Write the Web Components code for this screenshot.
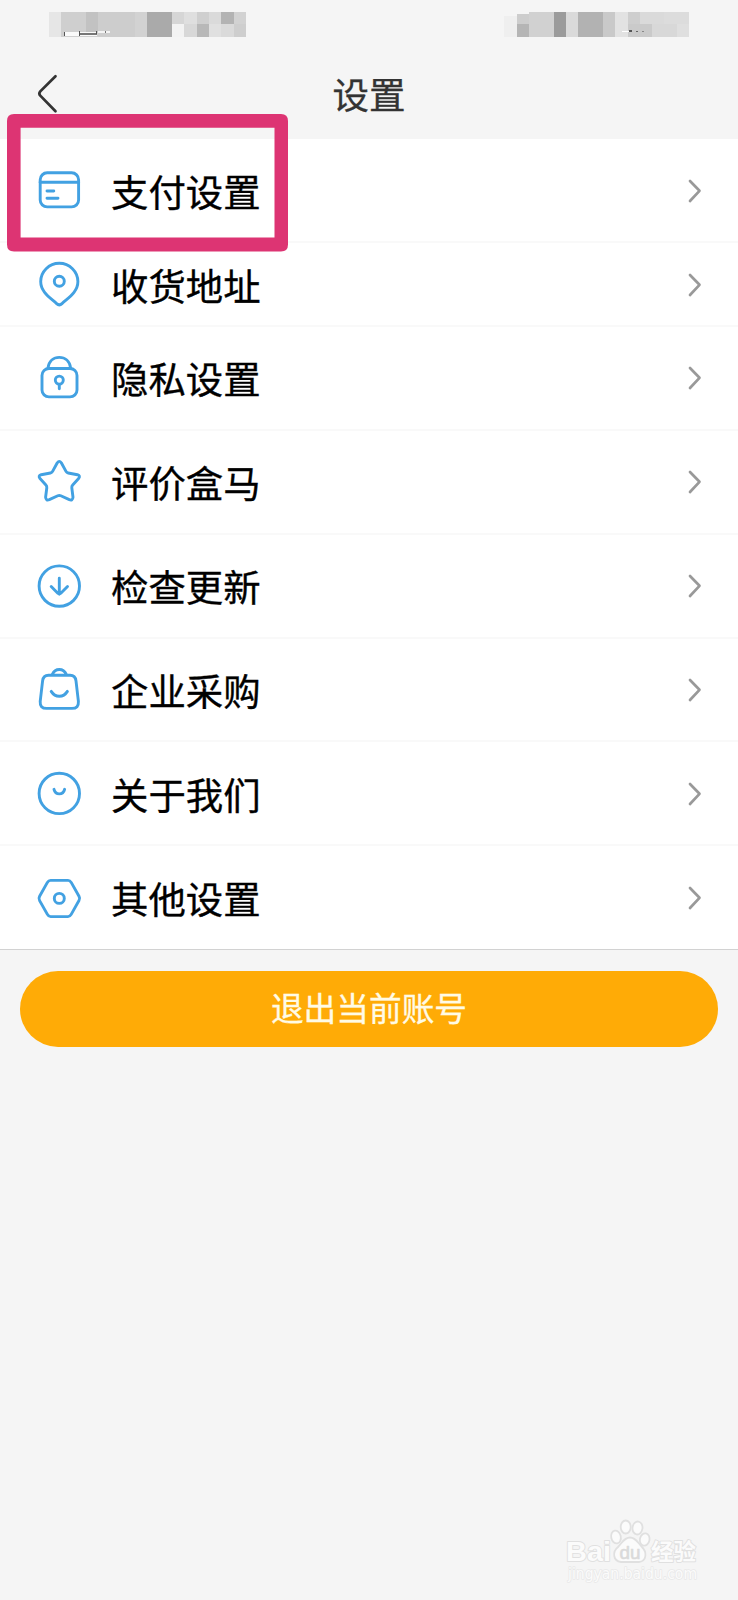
<!DOCTYPE html>
<html lang="zh-CN">
<head>
<meta charset="utf-8">
<title>设置</title>
<style>
html,body{margin:0;padding:0;background:#f5f5f5}
body{font-family:"Noto Sans CJK SC","Noto Sans",sans-serif}
</style>
</head>
<body>
<settings-page></settings-page>
<script>
const define = (name, html, setup) => customElements.define(name, class extends HTMLElement {
  connectedCallback() {
    if (this.shadowRoot) return;
    const t = document.createElement('template');
    t.innerHTML = html;
    this.attachShadow({ mode: 'open' }).appendChild(t.content.cloneNode(true));
    if (setup) setup(this, this.shadowRoot);
  }
});

// Glyphs: [top of the 48-unit viewBox, shapes]
const ICONS = {
  card: [167, '<rect x="40.2" y="172.8" width="38.4" height="34.1" rx="7"/><path d="M40.1 182.3H78.7M47 191H53.8M47 198.3H58"/>'],
  pin: [261, '<path d="M56.6 303.600C50 297.600 40.700 292 40.700 281.600a18.600 18.300 0 0 1 37.200 0C77.900 292 68.600 297.600 62 303.600Q59.300 306.200 56.600 303.600Z"/><circle cx="59.3" cy="281.2" r="5"/>'],
  lock: [354.9, '<rect x="42" y="368.400" width="35" height="28.400" rx="7"/><path d="M48 367.800C49 361 53.500 357.300 59.300 357.300S69.600 361 70.600 367.800M59.300 384.500V388.600"/><circle cx="59.3" cy="380" r="4"/>'],
  star: [458.6, '<path d="M57.300 462.400Q59.300 459.600 61.300 462.400L66 471Q66.700 472.300 68.200 472.600L77.400 474.300Q80.800 475.500 78.600 478.200L72.700 484.500Q71.600 485.700 71.800 487.300L73 496.800Q72.700 500.600 69.300 499.200L60.800 495.400Q59.300 494.700 57.800 495.400L49.300 499.200Q45.900 500.600 45.600 496.800L46.800 487.300Q47 485.700 45.900 484.500L40 478.200Q37.800 475.500 41.200 474.300L50.400 472.600Q51.900 472.300 52.600 471Z"/>'],
  down: [562.4, '<circle cx="59.300" cy="585.500" r="20.200"/><path d="M59.300 577.700V593.600M51.200 585.900L57.800 592.600Q59.300 594 60.800 592.600L67.500 585.900"/>'],
  bag: [666.1, '<path d="M48.500 675.400H70.100Q75.300 675.400 76 681L78.400 701.500Q78.900 708.500 72 708.500H46.600Q39.700 708.500 40.200 701.500L42.600 681Q43.300 675.400 48.500 675.400ZM52.300 674.500Q54.500 669.600 59.300 669.600T66.300 674.500M51.200 691.500Q54.300 696.400 59.300 696.400T67.400 691.500"/>'],
  face: [769.9, '<circle cx="59.300" cy="793.300" r="20.200"/><path d="M54 789.200C55.500 795.300 63.100 795.300 64.600 789.200"/>'],
  hex: [873.6, '<path d="M50.600 879H68Q70 879 71.200 881L79 894.800Q80.300 897 79 899.200L71.200 913Q70 915.200 68 915.200H50.600Q48.600 915.200 47.400 913L39.600 899.200Q38.300 897 39.600 894.800L47.400 881Q48.600 879 50.600 879Z"/><circle cx="59.300" cy="897" r="5"/>']
};

define('line-icon', `<style>:host{display:block;width:48px;height:48px;flex:none}
svg{display:block;width:48px;height:48px;overflow:visible;fill:none;stroke:#42a1e2;stroke-width:2.9;stroke-linecap:round;stroke-linejoin:round}</style><svg></svg>`,
(el, root) => {
  const [top, shapes] = ICONS[el.getAttribute('name')];
  const svg = root.querySelector('svg');
  svg.setAttribute('viewBox', `35 ${top} 48 48`);
  svg.innerHTML = shapes;
});

define('pixel-strip', `<style>:host{display:block;height:50px}svg{display:block}</style>
<svg width="738" height="50" shape-rendering="crispEdges"></svg>`,
(el, root) => {
  const cells = [
    [49,12,12,25,'#e6e6e6'],[61,12,25,25,'#cfcfcf'],[86,12,12,20,'#c2c2c2'],[86,32,12,5,'#cfcfcf'],[98,12,37,25,'#cdcdcd'],[135,12,12,25,'#d2d2d2'],
    [147,12,25,25,'#aaa'],[172,12,12,12,'#d6d6d6'],[172,24,12,13,'#f3f3f3'],[184,12,13,12,'#dfdfdf'],[184,24,13,13,'#d8d8d8'],
    [197,12,12,12,'#cfcfcf'],[197,24,12,13,'#b8b8b8'],[209,12,12,12,'#dadada'],[209,24,12,13,'#e0e0e0'],[221,12,13,12,'#b3b3b3'],[221,24,13,13,'#dadada'],[234,12,12,12,'#d2d2d2'],[234,24,12,13,'#cecece'],
    [64,32,33,4,'#fafafa'],[64,32,1,4,'#555'],[79,31,1,5,'#555'],[80,33,17,2,'#777'],[96,31,1,3,'#555'],[98,31,12,2,'#f4f4f4'],[105,31,1,2,'#777'],
    [504,16,13,21,'#efefef'],[517,14,12,10,'#cdcdcd'],[529,12,25,25,'#d1d1d1'],[517,24,12,13,'#b5b5b5'],[554,12,12,25,'#9b9b9b'],[566,12,12,25,'#dadada'],
    [578,12,25,25,'#b2b2b2'],[603,12,12,25,'#c9c9c9'],[615,12,13,25,'#e2e2e2'],[628,12,12,12,'#cecece'],[640,12,24,12,'#dadada'],[628,24,24,13,'#cacaca'],
    [652,24,25,13,'#d8d8d8'],[664,12,25,12,'#dcdcdc'],[677,24,12,13,'#dfdfdf'],[622,31,7,1,'#fff'],[629,30,3,2,'#555'],[636,31,2,1,'#666'],[642,31,2,1,'#888']];
  root.querySelector('svg').innerHTML = cells.map(([x,y,w,h,c]) => `<rect x="${x}" y="${y}" width="${w}" height="${h}" fill="${c}"/>`).join('');
});

define('nav-bar', `<style>:host{display:grid;grid-template-columns:80px 1fr 80px;height:89px;align-items:center;color:#333;font-size:36.5px;line-height:50px;-webkit-text-stroke:.3px #333}
svg{display:block;margin-left:36px;margin-top:-3px}
.t{text-align:center;padding-bottom:1px}</style>
<svg width="24" height="42" viewBox="36 72 24 42" fill="none" stroke="#333" stroke-width="2.7" stroke-linecap="round"><path d="M55.5 76.2L40.3 91.3Q38.4 93.5 40.3 95.7L55.5 111.2"/></svg>
<div class="t"><slot></slot></div>`);

define('setting-row', `<style>:host{display:flex;box-sizing:border-box;height:103.85px;align-items:center;padding:0 36px 0 35px;border-bottom:2px solid #f9f9f9;background:#fff;color:#000}
line-icon{margin-top:2px}
.label{flex:1;margin-left:28px;font-size:37.4px;line-height:54px;padding-top:1px;-webkit-text-stroke:.35px #000}
.go{display:block;flex:none;margin-top:1px}</style>
<div class="label"><slot></slot></div>
<svg class="go" width="14" height="24" viewBox="688 178.5 14 24" fill="none" stroke="#999" stroke-width="2.7" stroke-linecap="round" stroke-linejoin="round"><path d="M690 180.5L699.5 190.3L690 200.5"/></svg>`,
(el, root) => {
  const icon = document.createElement('line-icon');
  icon.setAttribute('name', el.getAttribute('icon'));
  root.querySelector('.label').before(icon);
});

define('logout-button', `<style>:host{display:block;padding:21px 20px 0}
button{display:block;width:100%;height:76px;border:0;border-radius:38px;background:#ffab06;color:#fffbe6;font:inherit;font-size:32.7px;line-height:48px;padding:0 0 3px;-webkit-text-stroke:.3px #fffbe6}</style>
<button><slot></slot></button>`);

define('focus-frame', `<style>:host{display:block;position:absolute;left:7px;top:114.3px;width:281px;height:137.4px}svg{display:block}</style>
<svg width="281" height="137.4"><path fill="#dd3473" fill-rule="evenodd" d="M7 0H274Q281 0 281 7V130.4Q281 137.4 274 137.4H7Q0 137.4 0 130.4V7Q0 0 7 0ZM13.6 13.8V123.5H267.5V13.8Z"/></svg>`);

define('water-mark', `<style>:host{display:block;position:absolute;left:560px;top:1514px}svg{display:block}
text{font-family:"Liberation Sans",sans-serif;paint-order:stroke}</style>
<svg width="146" height="78" viewBox="560 1514 146 78" fill="#fbfbfb" stroke="#e0e0e0" stroke-width="1.8" stroke-linejoin="round">
<text x="566" y="1561" font-size="28.5" font-weight="700" textLength="45" lengthAdjust="spacingAndGlyphs">Bai</text>
<ellipse cx="616" cy="1537" rx="4.8" ry="6.5" transform="rotate(-12 616 1537)"/><ellipse cx="625.7" cy="1527" rx="5" ry="6.5"/><ellipse cx="637.5" cy="1528" rx="5" ry="6.5" transform="rotate(8 637.5 1528)"/><ellipse cx="644.7" cy="1539.5" rx="4.8" ry="6.2" transform="rotate(12 644.7 1539.5)"/>
<path d="M630 1537.5C636 1537.5 638 1543 642 1547C647 1552 647 1561 639 1562H621C613 1561 612 1552 618 1547C622 1543 624 1537.5 630 1537.5Z"/>
<text x="619.5" y="1559" font-size="19" textLength="21" lengthAdjust="spacingAndGlyphs" fill="#dadada" stroke="#dadada" stroke-width=".6">du</text>
<text x="651" y="1559.5" font-size="22.5" font-weight="700" textLength="45" style="font-family:'Noto Sans CJK SC',sans-serif">经验</text>
<text x="568" y="1579" font-size="15" textLength="129" lengthAdjust="spacingAndGlyphs" stroke="#e8e8e8" stroke-width="1.5" style="font-family:'DejaVu Sans',sans-serif">jingyan.baidu.com</text>
</svg>`);

define('settings-page', `<style>:host{display:block;position:relative;width:738px;height:1600px;overflow:hidden;background:#f5f5f5}
.pay{height:104px}.addr{height:84px}.last{height:103.75px;border-bottom:1px solid #d2d2d2}</style>
<pixel-strip></pixel-strip>
<nav-bar>设置</nav-bar>
<setting-row class="pay" icon="card">支付设置</setting-row>
<setting-row class="addr" icon="pin">收货地址</setting-row>
<setting-row icon="lock">隐私设置</setting-row>
<setting-row icon="star">评价盒马</setting-row>
<setting-row icon="down">检查更新</setting-row>
<setting-row icon="bag">企业采购</setting-row>
<setting-row icon="face">关于我们</setting-row>
<setting-row class="last" icon="hex">其他设置</setting-row>
<logout-button>退出当前账号</logout-button>
<focus-frame></focus-frame>
<water-mark></water-mark>`);
</script>
</body>
</html>
